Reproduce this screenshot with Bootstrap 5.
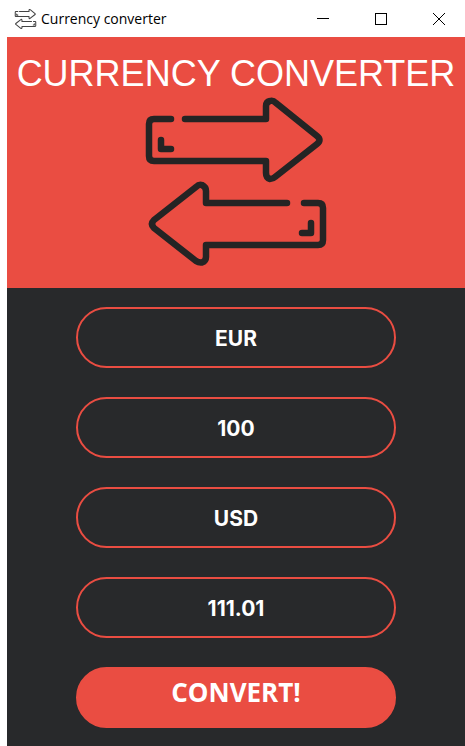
<!DOCTYPE html>
<html lang="en">
<head>
<meta charset="utf-8">
<meta name="viewport" content="width=device-width, initial-scale=1">
<title>Currency converter</title>
<link href="https://cdn.jsdelivr.net/npm/bootstrap@5.3.0/dist/css/bootstrap.min.css" rel="stylesheet">
<style>
  :root { --coral: #ea4d42; --ink: #28292b; }
  body { font-family: "Open Sans", "Noto Sans", sans-serif; background: #fff; }
  .titlebar { height: 37px; padding-left: 14px; padding-right: 3px; }
  .window-name { font-size: 14px; line-height: 20px; color: #000; }
  .window-btn { width: 46px; height: 36px; color: #000; }
  .app { margin-left: 7px; background: var(--ink); }
  .banner { background: var(--coral); padding: 16px 0 21px; gap: 2px; }
  .headline { font-family: "Liberation Sans", Arial, sans-serif; font-size: 36px; line-height: 42px; color: #fff; }
  .arrows { width: 192px; height: 170px; }
  .converter { padding: 19px 0 18px; gap: 29px; }
  .pill { width: 70%; height: 61px; border: 2px solid var(--coral); color: #fff; }
  .pill-field { font-family: Inter, sans-serif; font-size: 21px; background: transparent; padding: 2px 0 0; }
  .pill-btn, .pill-btn:hover { font-size: 26px; line-height: 36px; background: var(--coral); padding: 0 0 12px; color: #fff; }
</style>
</head>
<body class="min-vh-100 d-flex flex-column">
<svg class="d-none" aria-hidden="true">
  <symbol id="swap" viewBox="140 97 192 170">
    <g fill="none" stroke-linecap="round" stroke-linejoin="round">
      <path d="M171 119H154Q149 119 149 124V156Q149 161 154 161H266V173Q266 178 270 179Q273 179 275 177L317 144Q322 140 317 136L276 103Q273 100 270 101Q266 102 266 106V119H185"/>
      <path d="M161 140V149H171"/>
      <path d="M304 203H318Q323 203 323 208V240Q323 245 318 245H206V257Q206 261 202 262.500Q199 263 196 261L154 228Q150 224 154 220L196 187Q199 184 202 185Q206 187 206 191V203H287"/>
      <path d="M311 223V233H302"/>
    </g>
  </symbol>
</svg>

<header class="titlebar d-flex align-items-center">
  <svg width="23" height="20" stroke="#444" stroke-width="9" aria-hidden="true"><use href="#swap"/></svg>
  <span class="window-name ms-1 me-auto">Currency converter</span>
  <div class="d-flex gap-1">
    <button type="button" class="window-btn btn border-0 rounded-0 p-0 me-2 d-flex align-items-center justify-content-center" aria-label="Minimize">
      <svg width="12" height="12" stroke="currentColor" shape-rendering="crispEdges"><path d="M0 5.500H12"/></svg>
    </button>
    <button type="button" class="window-btn btn border-0 rounded-0 p-0 me-2 d-flex align-items-center justify-content-center" aria-label="Maximize">
      <svg width="12" height="12" fill="none" stroke="currentColor" shape-rendering="crispEdges"><path d="M.5 .5H11.500V11.500H.5Z"/></svg>
    </button>
    <button type="button" class="window-btn btn border-0 rounded-0 p-0 d-flex align-items-center justify-content-center" aria-label="Close">
      <svg width="12" height="12" stroke="currentColor"><path d="M0 0L12 12M12 0L0 12"/></svg>
    </button>
  </div>
</header>

<main class="app flex-grow-1">
  <section class="banner d-flex flex-column align-items-center">
    <h1 class="headline fw-normal text-center mb-0">CURRENCY CONVERTER</h1>
    <svg class="arrows" stroke="#242424" stroke-width="6.500" aria-hidden="true"><use href="#swap"/></svg>
  </section>
  <form class="converter d-flex flex-column align-items-center">
    <input class="pill pill-field rounded-pill text-center fw-bold" type="text" value="EUR" aria-label="From currency">
    <input class="pill pill-field rounded-pill text-center fw-bold" type="text" inputmode="decimal" value="100" aria-label="Amount">
    <input class="pill pill-field rounded-pill text-center fw-bold" type="text" value="USD" aria-label="To currency">
    <input class="pill pill-field rounded-pill text-center fw-bold" type="text" value="111.01" aria-label="Converted amount" readonly>
    <button class="pill pill-btn btn rounded-pill fw-bold" type="button">CONVERT!</button>
  </form>
</main>
<script src="https://cdn.jsdelivr.net/npm/bootstrap@5.3.0/dist/js/bootstrap.bundle.min.js"></script>
</body>
</html>
